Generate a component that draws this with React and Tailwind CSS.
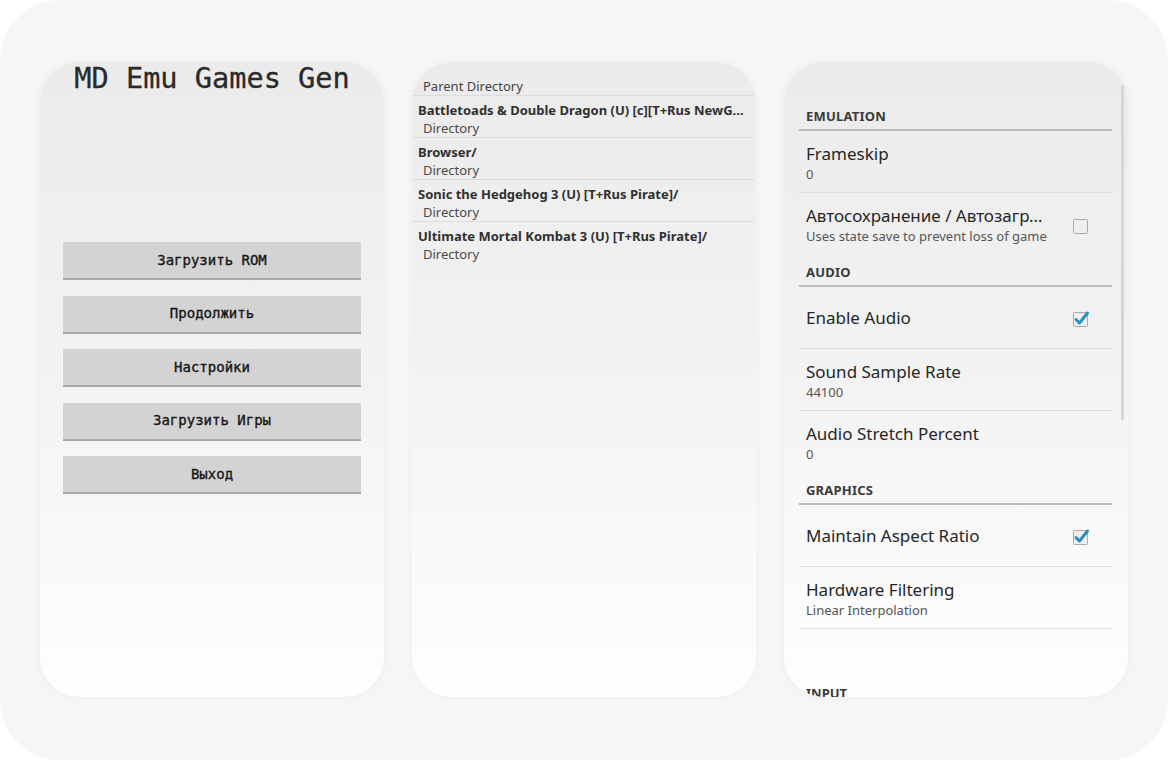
import React from "react";

const sans = { fontFamily: "'Noto Sans', 'Open Sans', sans-serif" };
const mono = { fontFamily: "'DejaVu Sans Mono', monospace" };

const menu = ["Загрузить ROM", "Продолжить", "Настройки", "Загрузить Игры", "Выход"];

const files = [
  "Battletoads & Double Dragon (U) [c][T+Rus NewGame]/",
  "Browser/",
  "Sonic the Hedgehog 3 (U) [T+Rus Pirate]/",
  "Ultimate Mortal Kombat 3 (U) [T+Rus Pirate]/",
];

function Card({ children }) {
  return (
    <div className="relative w-[344px] h-[635px] shrink-0 overflow-hidden rounded-[40px] bg-gradient-to-b from-[#ebebeb] via-[#f3f3f3] to-[#fefefe] shadow-[0_0_8px_rgba(0,0,0,0.04)]">
      {children}
    </div>
  );
}

function Checkbox({ checked }) {
  return (
    <svg width="18" height="20" viewBox="0 0 18 20" className="shrink-0">
      <rect x="1.5" y="4.5" width="14" height="14" fill="#efefef" stroke="#a9a9a9" strokeWidth="1" rx="1" />
      {checked && (
        <path
          d="M4 11.5 L7.5 15 L15.5 5"
          fill="none"
          stroke="#2b8fbf"
          strokeWidth="3"
          strokeLinecap="round"
          strokeLinejoin="round"
        />
      )}
    </svg>
  );
}

function Header({ label, pt }) {
  return (
    <div className={"pb-[3px] border-b-2 border-[#bdbdbd] " + pt}>
      <div className="pl-[7px] text-[13px] leading-[20px] font-bold text-[#3a3a3a] tracking-[0.2px]">{label}</div>
    </div>
  );
}

function Row({ title, sub, check, last }) {
  if (sub === undefined) {
    return (
      <div className="h-[62px] flex items-center justify-between pl-[7px] pr-[22px] border-b border-[#dedede]">
        <div className="text-[17px] text-[#262626]">{title}</div>
        {check !== undefined && <Checkbox checked={check} />}
      </div>
    );
  }
  return (
    <div
      className={
        "flex items-center justify-between pl-[7px] pr-[22px] pt-[12px] " +
        (last ? "" : "pb-[9px] border-b border-[#dedede]")
      }
    >
      <div className="min-w-0">
        <div className="text-[17px] leading-[22px] text-[#262626] truncate w-[245px]">{title}</div>
        <div className="text-[13px] leading-[18px] text-[#555]">{sub}</div>
      </div>
      {check !== undefined && <Checkbox checked={check} />}
    </div>
  );
}

export default function App() {
  return (
    <div className="w-[1168px] h-[760px] bg-white">
      <div className="w-full h-full rounded-[60px] bg-[#f6f6f6] flex gap-[28px] pl-[40px] pt-[62px]">
        <Card>
          <div className="flex flex-col items-center">
            <div className="text-[28.6px] leading-[32px] text-[#2a2a2a] whitespace-nowrap [-webkit-text-stroke:0.3px_#2a2a2a]" style={mono}>
              MD Emu Games Gen
            </div>
            <div className="mt-[148px] flex flex-col gap-[15.5px] w-[298px]">
              {menu.map((m) => (
                <div
                  key={m}
                  className="h-[38px] flex items-center justify-center bg-[#d3d3d3] border-b-2 border-[#a9a9a9] text-[14px] text-[#161616] [-webkit-text-stroke:0.35px_#161616]"
                  style={mono}
                >
                  {m}
                </div>
              ))}
            </div>
          </div>
        </Card>

        <Card>
          <div style={sans}>
            <div className="pt-[16px] pl-[11px] border-b border-[#dcdcdc] mr-[2px]">
              <div className="text-[13px] leading-[17px] text-[#444]">Parent Directory</div>
            </div>
            {files.map((f, i) => (
              <div
                key={f}
                className={"pt-[5px] pl-[6px] pr-[4px] mr-[2px] " + (i < files.length - 1 ? "border-b border-[#dcdcdc]" : "")}
              >
                <div className="text-[13px] leading-[18px] font-bold text-[#303030] truncate">{f}</div>
                <div className="pl-[5px] text-[13px] leading-[18px] text-[#4a4a4a]">Directory</div>
              </div>
            ))}
          </div>
        </Card>

        <Card>
          <div className="absolute right-[4px] top-[23px] w-[3px] h-[335px] bg-[#d6d6d6]" />
          <div className="pt-[28px] ml-[15px] mr-[16px]" style={sans}>
            <Header label="EMULATION" pt="pt-[16px]" />
            <Row title="Frameskip" sub="0" />
            <Row title="Автосохранение / Автозагрузка" sub="Uses state save to prevent loss of game" check={false} last />
            <Header label="AUDIO" pt="pt-[17px]" />
            <Row title="Enable Audio" check={true} />
            <Row title="Sound Sample Rate" sub="44100" />
            <Row title="Audio Stretch Percent" sub="0" last />
            <Header label="GRAPHICS" pt="pt-[17px]" />
            <Row title="Maintain Aspect Ratio" check={true} />
            <Row title="Hardware Filtering" sub="Linear Interpolation" />
            <div className="pt-[54px] pl-[7px] text-[13px] leading-[20px] font-bold text-[#3a3a3a]">INPUT</div>
          </div>
        </Card>
      </div>
    </div>
  );
}
